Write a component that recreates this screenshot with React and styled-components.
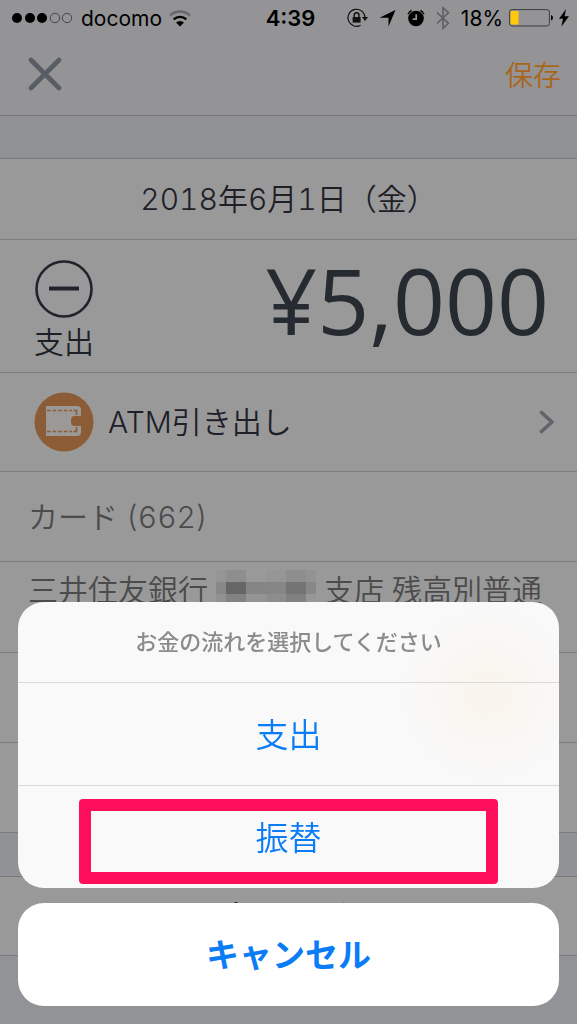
import React, { useState } from "react";
import styled, { createGlobalStyle } from "styled-components";

const GlobalStyle = createGlobalStyle`
  * {
    box-sizing: border-box;
  }

  body {
    margin: 0;
    background-color: #929396;
    font-family: Inter, "Noto Sans CJK JP", sans-serif;
    font-weight: 350;
    color: #1d2027;
  }

  button {
    margin: 0;
    padding: 0;
    border: none;
    background: none;
    font: inherit;
    color: inherit;
    cursor: pointer;
  }

  svg {
    display: block;
    flex: none;
  }
`;

const Page = styled.main`
  display: flex;
  flex-direction: column;
  min-height: 100vh;
`;

const Header = styled.header`
  background-color: #949496;
  border-bottom: 1px solid #77787c;
`;

const StatusBar = styled.div`
  display: grid;
  grid-template-columns: 1fr auto 1fr;
  align-items: center;
  height: 36px;
  padding: 0 8px 0 12px;
  font-size: 21px;
  font-weight: 400;
  color: #000;
`;

const StatusGroup = styled.div`
  display: flex;
  align-items: center;
  justify-content: ${props => (props.$end ? "flex-end" : "flex-start")};
  gap: ${props => props.$gap}px;
`;

const Clock = styled.time`
  font-size: 22px;
  font-weight: 600;
`;

const NavBar = styled.nav`
  display: flex;
  justify-content: space-between;
  align-items: center;
  height: 79px;
  padding: 0 16px 3px 28px;
`;

const SaveButton = styled.button`
  font-size: 28px;
  color: #a8661b;
`;

const Spacer = styled.div`
  height: ${props => props.$height}px;
  background-color: #919296;
  border-bottom: 1px solid #77787c;
`;

const Row = styled.section`
  display: flex;
  align-items: center;
  justify-content: ${props => props.$justify || "flex-start"};
  height: ${props => props.$height}px;
  padding: 0 28px;
  border-bottom: 1px solid #7b7c82;
  background-color: #999;
  font-size: 30px;
  font-variant-numeric: tabular-nums;
  line-height: 40px;
  white-space: nowrap;
  color: ${props => (props.$muted ? "#4b4b4b" : "#1d2027")};
`;

const AmountRow = styled(Row)`
  padding: 8px 28px 0 34px;
`;

const TypeButton = styled.button`
  display: flex;
  flex-direction: column;
  align-items: center;
  gap: 6px;
  line-height: 36px;
`;

const Amount = styled.strong`
  padding-bottom: 20px;
  font-family: "Open Sans", sans-serif;
  font-size: 91px;
  font-weight: 500;
  line-height: 100px;
  color: #262a31;
`;

const CategoryRow = styled(Row)`
  padding: 0 22px 0 34px;
`;

const CategoryLink = styled.a`
  display: flex;
  align-items: center;
  gap: 14px;
  width: 100%;
  color: inherit;
  text-decoration: none;
`;

const CategoryName = styled.span`
  flex: 1;
`;

const AccountRow = styled(Row)`
  align-items: flex-start;
  padding-top: 8px;
`;

const Mosaic = styled.span`
  display: grid;
  grid-template-columns: 10px 20px 20px 20px 20px 10px;
  grid-auto-rows: 12px;
  margin: 0 8px;
`;

const Pixel = styled.i`
  background-color: ${props => props.$color};
`;

const Sheet = styled.div`
  position: fixed;
  right: 18px;
  bottom: 18px;
  left: 18px;
  display: flex;
  flex-direction: column;
  gap: 15px;
`;

const SheetPanel = styled.div`
  overflow: hidden;
  border-radius: 26px;
  background: radial-gradient(
      circle at 470px 92px,
      #f9f4eb 0,
      #f9f7f3 45px,
      rgba(249, 249, 250, 0) 90px
    )
    #f9f9fa;
`;

const SheetTitle = styled.h2`
  margin: 0;
  height: 80px;
  font-size: 22px;
  font-weight: 500;
  line-height: 80px;
  text-align: center;
  color: #8b8b8b;
`;

const Option = styled.button`
  position: relative;
  display: block;
  width: 100%;
  height: 103px;
  padding-bottom: 3px;
  border-top: 1px solid #d9d9dc;
  font-size: 33px;
  color: #0a7cf6;
`;

const Marker = styled.span`
  position: absolute;
  top: 13px;
  right: 61px;
  bottom: 4px;
  left: 61px;
  border: 12px solid #ff0f5b;
  border-radius: 4px;
  pointer-events: none;
`;

const CancelButton = styled.button`
  height: 103px;
  padding-bottom: 4px;
  border-radius: 26px;
  background-color: #fff;
  font-size: 33px;
  font-weight: 700;
  color: #0a7cf6;
`;

const mosaicColors = [
  "#959595", "#8e8e8e", "#999", "#969696", "#8e8e8e", "#939393",
  "#888", "#666", "#858585", "#868686", "#747474", "#888",
  "#919191", "#828282", "#949494", "#8d8d8d", "#818181", "#979797"
];

const options = [
  { id: "payment", label: "支出" },
  { id: "transfer", label: "振替", marked: true }
];

const SignalDots = () => (
  <svg width="62" height="12" viewBox="0 0 62 12" aria-label="電波">
    {[5, 18, 30].map(x => (
      <circle key={x} cx={x} cy="6" r="5" />
    ))}
    {[43, 55].map(x => (
      <circle key={x} cx={x} cy="6" r="4.7" fill="none" stroke="#333" strokeWidth="0.8" />
    ))}
  </svg>
);

const WifiIcon = () => (
  <svg width="22" height="17" viewBox="0 0 22 17" fill="none" strokeWidth="2.4">
    <path d="M1 5.5a14.5 14.5 0 0 1 20 0" stroke="#68686a" />
    <path d="M4.7 9.4a9.2 9.2 0 0 1 12.6 0" stroke="#000" />
    <path d="M11 16.5l-4-4a5.8 5.8 0 0 1 8 0z" fill="#000" />
  </svg>
);

const LockIcon = () => (
  <svg width="21" height="20" viewBox="0 0 21 20" fill="none" stroke="#111" strokeWidth="1.2">
    <path d="M13.6 17.2A8.5 8.5 0 1 1 18 9.5" />
    <path d="M15 9h6l-3 4z" fill="#111" stroke="none" />
    <path d="M5.6 9h8v5.6h-8z" fill="#111" stroke="none" />
    <path d="M7.2 9V7.2a2.4 2.4 0 0 1 4.8 0V9" strokeWidth="1.4" />
  </svg>
);

const LocationIcon = () => (
  <svg width="17" height="18" viewBox="0 0 17 18">
    <path d="M16.5 1L9.5 17.5V8.8H.5z" />
  </svg>
);

const AlarmIcon = () => (
  <svg width="18" height="18" viewBox="0 0 18 18" fill="none">
    <circle cx="9" cy="9.5" r="7.8" fill="#000" />
    <path d="M9.2 5.2v4.9H5.6" stroke="#949496" strokeWidth="1.7" />
    <path d="M1 5.2A9 9 0 0 1 4.6 1.4M13.4 1.4A9 9 0 0 1 17 5.2" stroke="#000" strokeWidth="1.4" />
  </svg>
);

const BluetoothIcon = () => (
  <svg width="14" height="24" viewBox="0 0 14 24" fill="none" stroke="#606063" strokeWidth="1.6">
    <path d="M1 6.5l11.5 10.8L7 22.3V1.7l5.5 5L1 17.5" />
  </svg>
);

const BatteryIcon = () => (
  <svg width="44" height="18" viewBox="0 0 44 18">
    <rect x="0.6" y="0.6" width="39.8" height="16.4" rx="2.5" fill="none" stroke="#3c3c3d" />
    <path d="M2.5 2H9.5v13.6H2.5a1 1 0 0 1-1-1V3a1 1 0 0 1 1-1z" fill="#ffc90a" />
    <path d="M42 6q2 .5 2 2.8T42 11.6z" />
  </svg>
);

const BoltIcon = () => (
  <svg width="10" height="18" viewBox="0 0 10 18">
    <path d="M7 0L0 9.8h4L2.4 17.5 10 7.3H5.6z" />
  </svg>
);

const CloseIcon = () => (
  <svg width="34" height="34" viewBox="0 0 34 34" stroke="#585d64" strokeWidth="4.6" strokeLinecap="round">
    <path d="M3 3l28 28M31 3L3 31" />
  </svg>
);

const MinusIcon = () => (
  <svg width="58" height="58" viewBox="0 0 58 58" fill="none" stroke="#21242c">
    <circle cx="29" cy="29" r="27.5" strokeWidth="2.6" />
    <path d="M14 28.5h30" strokeWidth="4" />
  </svg>
);

const WalletIcon = () => (
  <svg width="60" height="60" viewBox="0 0 60 60">
    <circle cx="30" cy="30" r="29.5" fill="#8b5c35" />
    <path
      d="M12 14h31q4 0 4 4v6h-6q-4 0-4 4v2q0 4 4 4h6v6q0 4-4 4H12z"
      fill="#9b9895"
    />
    <path
      d="M13 18.5h25M13 39.5h25"
      fill="none"
      stroke="#8b5c35"
      strokeWidth="1.6"
      strokeDasharray="3.6 2"
    />
    <path
      d="M39.5 18.5h3v4.5M39.5 39.5h3V35"
      fill="none"
      stroke="#8b5c35"
      strokeWidth="1.6"
    />
  </svg>
);

const ChevronIcon = () => (
  <svg width="16" height="24" viewBox="0 0 16 24" fill="none" stroke="#61646a" strokeWidth="3.6" strokeLinecap="round" strokeLinejoin="round">
    <path d="M2.5 2.5L13 12 2.5 21.5" />
  </svg>
);

export default function App() {
  const [type, setType] = useState("支出");

  return (
    <>
      <GlobalStyle />
      <Page>
        <Header>
          <StatusBar>
            <StatusGroup $gap={7}>
              <SignalDots />
              <span>docomo</span>
              <WifiIcon />
            </StatusGroup>
            <Clock>4:39</Clock>
            <StatusGroup $end $gap={11}>
              <LockIcon />
              <LocationIcon />
              <AlarmIcon />
              <BluetoothIcon />
              <StatusGroup $gap={6}>
                <span>18%</span>
                <BatteryIcon />
                <BoltIcon />
              </StatusGroup>
            </StatusGroup>
          </StatusBar>
          <NavBar>
            <button type="button" aria-label="閉じる">
              <CloseIcon />
            </button>
            <SaveButton type="button">保存</SaveButton>
          </NavBar>
        </Header>
        <Spacer $height={43} />
        <Row $height={81} $justify="center">
          2018年6月1日（金）
        </Row>
        <AmountRow $height={133} $justify="space-between">
          <TypeButton type="button">
            <MinusIcon />
            {type}
          </TypeButton>
          <Amount>¥5,000</Amount>
        </AmountRow>
        <CategoryRow $height={99}>
          <CategoryLink href="#category">
            <WalletIcon />
            <CategoryName>ATM引き出し</CategoryName>
            <ChevronIcon />
          </CategoryLink>
        </CategoryRow>
        <Row $height={90} $muted>
          カード (662)
        </Row>
        <AccountRow $height={91} $muted>
          三井住友銀行
          <Mosaic aria-hidden="true">
            {mosaicColors.map((color, i) => (
              <Pixel key={i} $color={color} />
            ))}
          </Mosaic>
          支店 残高別普通
        </AccountRow>
        <Row $height={90} />
        <Row $height={90} />
        <Spacer $height={44} />
        <Row $height={79} $justify="center">
          記録をコピー
        </Row>
      </Page>
      <Sheet role="dialog" aria-labelledby="sheet-title">
        <SheetPanel>
          <SheetTitle id="sheet-title">お金の流れを選択してください</SheetTitle>
          {options.map(option => (
            <Option key={option.id} type="button" onClick={() => setType(option.label)}>
              {option.label}
              {option.marked && <Marker />}
            </Option>
          ))}
        </SheetPanel>
        <CancelButton type="button">キャンセル</CancelButton>
      </Sheet>
    </>
  );
}
